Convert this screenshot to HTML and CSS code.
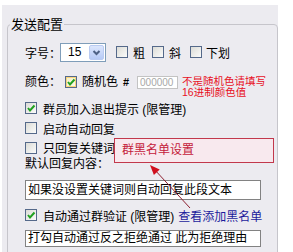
FILE: index.html
```html
<!DOCTYPE html>
<html>
<head>
<meta charset="utf-8">
<link rel="stylesheet" href="styles.css">
</head>
<body>
<div class="panel">
  <fieldset class="group">
    <legend class="legend">发送配置</legend>
    <div class="content">
      <div class="row r1">
        <span class="label w35">字号：</span>
        <div class="select">
          <span class="select-value">15</span>
          <span class="select-btn"><svg width="13" height="13" viewBox="0 0 13 13"><polyline points="3.5,5 6.5,8 9.5,5" fill="none" stroke="#4D6185" stroke-width="2"/></svg></span>
        </div>
        <span class="cb ml10"></span><span class="cb-text ml5">粗</span>
        <span class="cb ml7"></span><span class="cb-text ml5">斜</span>
        <span class="cb ml9"></span><span class="cb-text ml4">下划</span>
      </div>
      <div class="row r2">
        <span class="label w40 lh20">颜色：</span>
        <span class="cb checked hover mt4"><svg width="10" height="10" viewBox="0 0 10 10"><polyline points="2,5 4,7.5 8.5,2.5" fill="none" stroke="#21A121" stroke-width="2"/></svg></span>
        <span class="cb-text ml5 lh20">随机色</span>
        <span class="hash lh20">#</span>
        <span class="color-input">000000</span>
        <span class="hint">不是随机色请填写<br>16进制颜色值</span>
      </div>
      <div class="row r3">
        <span class="cb checked"><svg width="10" height="10" viewBox="0 0 10 10"><polyline points="2,5 4,7.5 8.5,2.5" fill="none" stroke="#21A121" stroke-width="2"/></svg></span>
        <span class="cb-text ml6">群员加入退出提示 (限管理)</span>
      </div>
      <div class="row r4">
        <span class="cb"></span>
        <span class="cb-text ml6">启动自动回复</span>
      </div>
      <div class="row r5">
        <span class="cb"></span>
        <span class="cb-text ml6">只回复关键词</span>
      </div>
      <div class="row r6">
        <span class="label">默认回复内容：</span>
      </div>
      <div class="textbox tb1">如果没设置关键词则自动回复此段文本</div>
      <div class="row r7">
        <span class="cb checked"><svg width="10" height="10" viewBox="0 0 10 10"><polyline points="2,5 4,7.5 8.5,2.5" fill="none" stroke="#21A121" stroke-width="2"/></svg></span>
        <span class="cb-text ml6">自动通过群验证 (限管理)</span>
        <a class="link">查看添加黑名单</a>
      </div>
      <div class="textbox tb2">打勾自动通过反之拒绝通过 此为拒绝理由</div>
    </div>
  </fieldset>
  <div class="callout">群黑名单设置</div>
  <svg class="arrow" width="276" height="247" viewBox="0 0 276 247">
    <line x1="188" y1="203" x2="152" y2="164" stroke="#8E2030" stroke-width="1"/>
    <polygon points="148,160 157.7,164.6 151.9,170" fill="#D0101E"/>
  </svg>
</div>
</body>
</html>
```

FILE: styles.css
```css
* { box-sizing: border-box; }
html, body { margin: 0; padding: 0; background: #ffffff; }
body {
  font-family: "Liberation Sans", "Noto Sans CJK SC", sans-serif;
  font-size: 12px;
  color: #000;
}
.panel {
  position: relative;
  margin: 5px 0 0 2px;
  width: 276px;
  height: 247px;
  padding-top: 13px;
  background: #ECEBF0;
  overflow: hidden;
}
.group {
  margin: 0 0 0 5px;
  padding: 0;
  border: 1px solid #C6C5CB;
  border-radius: 4px;
  height: 260px;
  min-width: 0;
}
.legend {
  font-size: 13px;
  line-height: 13px;
  padding: 0 1px;
  margin-left: 2px;
}
.content { padding: 11px 0 0 17px; }
.row { display: flex; align-items: center; height: 20px; white-space: nowrap; }
.r2 { margin-top: 10px; height: 26px; align-items: flex-start; }
.r5 { height: 19px; }
.r6 { height: 14px; }
.r6 .label { line-height: 14px; }
.r7 { margin-top: 5px; }
.label { display: inline-block; }
.w35 { width: 35px; }
.w40 { width: 40px; }
.lh20 { line-height: 20px; }
.ml4 { margin-left: 4px; }
.ml5 { margin-left: 5px; }
.ml6 { margin-left: 6px; }
.ml7 { margin-left: 7px; }
.ml9 { margin-left: 9px; }
.ml10 { margin-left: 10px; }
.mt4 { margin-top: 4px; }

.select {
  display: flex;
  align-items: center;
  width: 46px;
  height: 19px;
  padding: 1px;
  border: 1px solid #7F9DB9;
  background: #fff;
}
.select-value { padding-left: 6px; line-height: 15px; }
.select-btn {
  margin-left: auto;
  width: 15px;
  height: 15px;
  display: flex;
  align-items: center;
  justify-content: center;
  border: 1px solid #BACBF2;
  border-radius: 2px;
  background: linear-gradient(#DCE6FD, #B6CAF6);
}

.cb {
  flex: none;
  display: inline-flex;
  align-items: center;
  justify-content: center;
  width: 12px;
  height: 12px;
  border: 1px solid #55698A;
  background: linear-gradient(135deg, #DCDCD7, #FBFBFA);
}
.cb.hover { box-shadow: inset 0 0 0 1px #F9D47A; background: linear-gradient(135deg, #F4EFC8, #FCFAEA); }

.hash { display: inline-block; width: 8px; margin-left: 4px; text-align: center; font-weight: bold; font-size: 11px; }
.color-input {
  flex: none;
  width: 41px;
  height: 13px;
  margin: 4px 0 0 7px;
  padding-left: 2px;
  border: 1px solid #C3C3C3;
  background: #fff;
  color: #A8A8A8;
  font-size: 10px;
  line-height: 11px;
  overflow: hidden;
}
.hint {
  margin: 4px 0 0 4px;
  color: #E8101E;
  font-size: 10.5px;
  line-height: 11px;
}

.textbox {
  width: 236px;
  padding-left: 2px;
  border: 1px solid #828282;
  background: #fff;
  white-space: nowrap;
  overflow: hidden;
}
.tb1 { margin-top: 9px; height: 20px; line-height: 18px; }
.tb2 { margin-top: 5px; height: 17px; line-height: 15px; }

.link { color: #1C1C9C; margin-left: 4px; }

.callout {
  position: absolute;
  left: 112px;
  top: 133px;
  width: 160px;
  height: 25px;
  padding-left: 7px;
  border: 1px solid #C2384C;
  background: #F8E9EE;
  color: #C4203A;
  line-height: 23px;
}
.arrow { position: absolute; left: 0; top: 0; pointer-events: none; }
```
